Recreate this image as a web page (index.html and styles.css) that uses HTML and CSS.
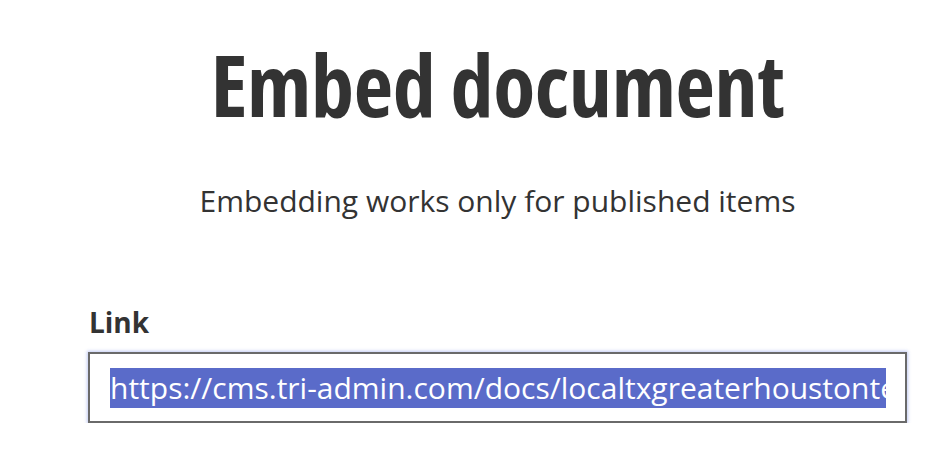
FILE: index.html
```html
<!DOCTYPE html>
<html lang="en">
<head>
<meta charset="utf-8">
<title>Embed document</title>
<link rel="stylesheet" href="styles.css">
</head>
<body>
<main class="panel">
  <h1 class="title">Embed document</h1>
  <p class="subtitle">Embedding works only for published items</p>
  <label class="label" for="link">Link</label>
  <div class="field" id="link"><span class="selected">https://cms.tri-admin.com/docs/localtxgreaterhoustontexas/embed-document</span></div>
</main>
</body>
</html>
```
FILE: styles.css
```css
html, body {
  margin: 0;
  padding: 0;
  background: #ffffff;
}
body {
  font-family: "Open Sans", "Noto Sans", sans-serif;
  color: #333333;
}
.panel {
  margin-left: 88px;
  width: 819px;
  padding-top: 34px;
  display: flex;
  flex-direction: column;
}
.title {
  margin: 0;
  text-align: center;
  font-size: 86px;
  line-height: 100px;
  font-weight: 700;
  font-stretch: 75%;
  letter-spacing: -0.3px;
  color: #333333;
}
.subtitle {
  margin: 49px 0 0;
  text-align: center;
  font-size: 30px;
  line-height: 36px;
  font-weight: 400;
}
.label {
  margin-top: 85px;
  margin-left: 1px;
  font-size: 28px;
  line-height: 36px;
  font-weight: 700;
}
.field {
  margin-top: 12px;
  height: 67px;
  box-sizing: content-box;
  border: 2px solid #6a6a6a;
  box-shadow: 0 0 3px 1px rgba(120, 140, 230, 0.45);
  padding: 0 19px 0 20px;
  overflow: hidden;
  white-space: nowrap;
  display: flex;
  align-items: center;
}
.selected {
  display: block;
  flex: 1 1 auto;
  overflow: hidden;
  background: #5a6bc9;
  color: #ffffff;
  font-size: 30px;
  line-height: 40px;
  white-space: nowrap;
}
```
